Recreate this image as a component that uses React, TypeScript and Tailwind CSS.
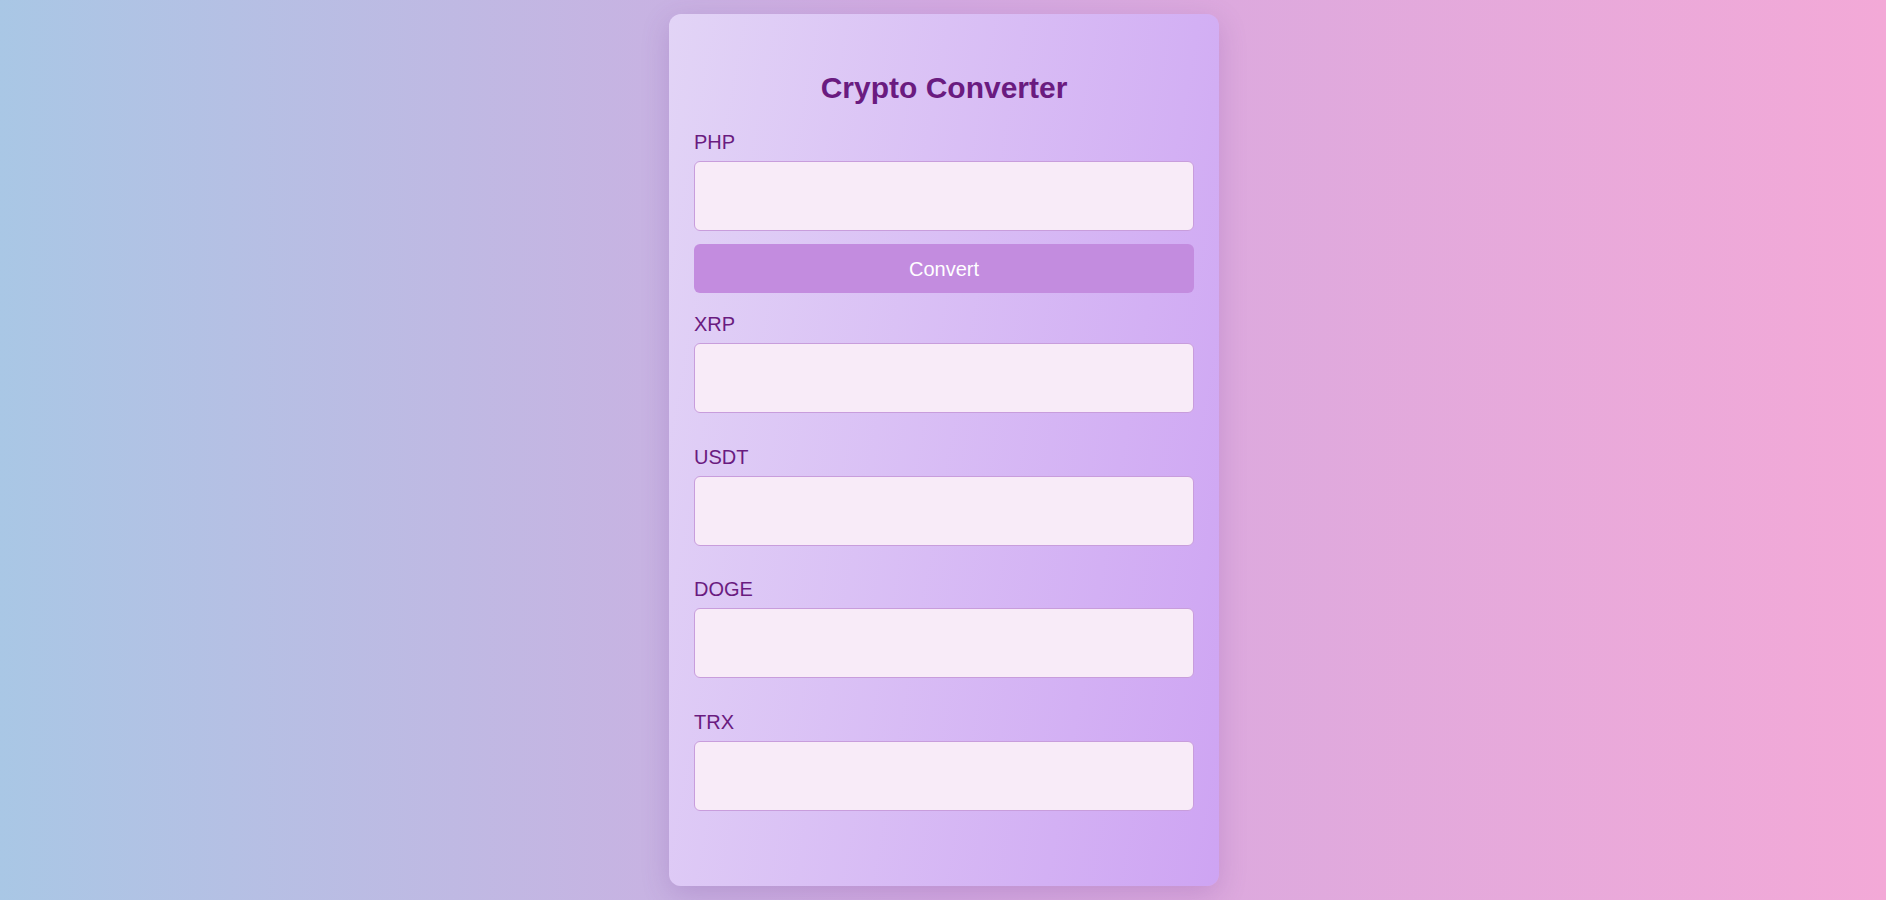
import React from "react";

const COINS = ["XRP", "USDT", "DOGE", "TRX"];

function Field({ label, className = "" }: { label: string; className?: string }) {
  return (
    <div className={className}>
      <label className="block text-[20px] leading-[22px] text-[#6a1b80] mb-[8px]">
        {label}
      </label>
      <input
        type="text"
        className="block w-full h-[70px] rounded-md border border-[#c89ddc] bg-[#f8ebf8] px-3 text-[19.2px] text-[#6a1b80] outline-none"
      />
    </div>
  );
}

export default function App() {
  return (
    <div className="h-screen overflow-hidden flex justify-center pl-[2px] pt-[14px] bg-linear-to-r from-[#a9c7e5] via-[#d3a9e1] to-[#f3a9d7] font-['Liberation_Sans',Arial,sans-serif]">
      <div className="w-[550px] h-fit rounded-xl px-[25px] pt-[56px] pb-[75px] bg-linear-100 from-[#e2d4f6] to-[#cea4f3] shadow-[0_8px_28px_rgba(110,60,150,0.22)]">
        <h1 className="text-center text-[30px] leading-[36px] font-bold text-[#6a1b80]">
          Crypto Converter
        </h1>

        <Field label="PHP" className="mt-[25px]" />
        <button className="mt-[13px] block w-full h-[49px] rounded-md bg-[#c38cdf] text-white text-[20px]">
          Convert
        </button>

        {COINS.map((coin, i) => (
          <Field key={coin} label={coin} className={i === 0 ? "mt-[20px]" : "mt-[32.5px]"} />
        ))}
      </div>
    </div>
  );
}
